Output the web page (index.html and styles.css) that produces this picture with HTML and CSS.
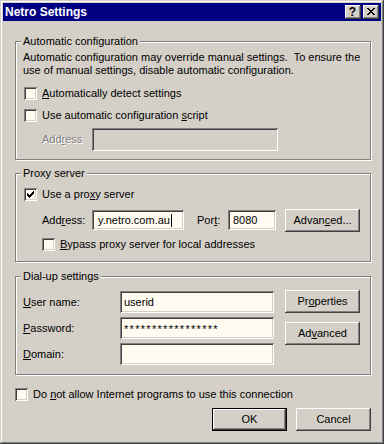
FILE: index.html
```html
<!DOCTYPE html>
<html>
<head>
    <title>Netro Settings</title>
    <link rel="stylesheet" href="styles.css">
</head>
<body>
    <div class="window">
        <div class="titlebar">
            <span class="title">Netro Settings</span>
            <div class="caption-buttons">
                <span class="caption-btn help">?</span>
                <span class="caption-btn">
                    <svg width="16" height="14" viewBox="0 0 16 14" shape-rendering="crispEdges">
                        <path d="M4 3h2v1h-2z M10 3h2v1h-2z M5 4h2v1h-2z M9 4h2v1h-2z M6 5h4v1h-4z M7 6h2v1h-2z M6 7h4v1h-4z M5 8h2v1h-2z M9 8h2v1h-2z M4 9h2v1h-2z M10 9h2v1h-2z" fill="#000"/>
                    </svg>
                </span>
            </div>
        </div>

        <div class="content">
            <div class="group group-auto">
                <div class="group-title">Automatic configuration</div>
                <p class="desc">Automatic configuration may override manual settings.&nbsp; To ensure the<br>use of manual settings, disable automatic configuration.</p>
                <div class="check-row first">
                    <span class="checkbox"></span>
                    <span class="check-label"><u>A</u>utomatically detect settings</span>
                </div>
                <div class="check-row second">
                    <span class="checkbox"></span>
                    <span class="check-label">Use automatic configuration <u>s</u>cript</span>
                </div>
                <div class="field-row script-row">
                    <span class="field-label disabled">Add<u>r</u>ess</span>
                    <span class="textbox textbox-disabled script-box"></span>
                </div>
            </div>

            <div class="group group-proxy">
                <div class="group-title">Proxy server</div>
                <div class="check-row first">
                    <span class="checkbox">
                        <svg width="13" height="13" viewBox="0 0 13 13" shape-rendering="crispEdges">
                            <path d="M3 5h1v3h-1z M4 6h1v3h-1z M5 7h1v3h-1z M6 6h1v3h-1z M7 5h1v3h-1z M8 4h1v3h-1z M9 3h1v3h-1z" fill="#000"/>
                        </svg>
                    </span>
                    <span class="check-label">Use a pro<u>x</u>y server</span>
                </div>
                <div class="proxy-row">
                    <span class="field-label proxy-label">Add<u>r</u>ess:</span>
                    <span class="textbox proxy-box">y.netro.com.au<span class="caret"></span></span>
                    <span class="field-label port-label">Por<u>t</u>:</span>
                    <span class="textbox port-box">8080</span>
                    <button class="btn proxy-btn">Advan<u>c</u>ed...</button>
                </div>
                <div class="check-row bypass-row">
                    <span class="checkbox"></span>
                    <span class="check-label"><u>B</u>ypass proxy server for local addresses</span>
                </div>
            </div>

            <div class="group group-dialup">
                <div class="group-title">Dial-up settings</div>
                <div class="dialup-body">
                    <div class="dialup-fields">
                        <div class="field-row">
                            <span class="field-label dialup-label"><u>U</u>ser name:</span>
                            <span class="textbox dialup-box">userid</span>
                        </div>
                        <div class="field-row">
                            <span class="field-label dialup-label"><u>P</u>assword:</span>
                            <span class="textbox dialup-box password">*****************</span>
                        </div>
                        <div class="field-row">
                            <span class="field-label dialup-label"><u>D</u>omain:</span>
                            <span class="textbox dialup-box"></span>
                        </div>
                    </div>
                    <div class="dialup-buttons">
                        <button class="btn">Pr<u>o</u>perties</button>
                        <button class="btn">Ad<u>v</u>anced</button>
                    </div>
                </div>
            </div>

            <div class="check-row no-internet">
                <span class="checkbox"></span>
                <span class="check-label">Do <u>n</u>ot allow Internet programs to use this connection</span>
            </div>

            <div class="dialog-buttons">
                <button class="btn btn-default">OK</button>
                <button class="btn">Cancel</button>
            </div>
        </div>
    </div>
</body>
</html>
```

FILE: styles.css
```css
:root {
    --face: #d4d0c8;
    --shadow: #808080;
    --dark: #404040;
    --field: #fffbf0;
    --caption: #000080;
}

* {
    margin: 0;
    padding: 0;
    box-sizing: border-box;
}

body {
    margin: 0;
    background: var(--face);
    font-family: 'Liberation Sans', Arial, sans-serif;
    font-size: 11px;
    line-height: 13px;
    color: #000;
}

u {
    text-decoration: underline;
    text-underline-offset: 1px;
}

.window {
    width: 384px;
    height: 444px;
    padding: 3px;
    background: var(--face);
    box-shadow: inset -1px -1px var(--dark), inset 1px 1px var(--face),
                inset -2px -2px var(--shadow), inset 2px 2px #fff;
}

/* title bar */
.titlebar {
    height: 18px;
    background: var(--caption);
    display: flex;
    align-items: center;
    padding: 0 2px;
    color: #fff;
    font-weight: bold;
}

.title {
    font-size: 12px;
}

.caption-buttons {
    margin-left: auto;
    display: flex;
    gap: 2px;
}

.caption-btn {
    width: 16px;
    height: 14px;
    background: var(--face);
    color: #000;
    display: flex;
    align-items: center;
    justify-content: center;
    box-shadow: inset -1px -1px var(--dark), inset 1px 1px #fff,
                inset -2px -2px var(--shadow), inset 2px 2px var(--face);
}

.caption-btn.help {
    font-size: 12px;
    padding-right: 1px;
}

.caption-btn svg {
    display: block;
}

/* content */
.content {
    padding: 0 10px 0 12px;
}

.group {
    width: 356px;
    border: 1px solid var(--shadow);
    box-shadow: 1px 1px 0 #fff, inset 1px 1px 0 #fff;
    padding: 0 7px;
}

.group-title {
    display: table;
    margin: -7px 0 0 -2px;
    padding: 0 2px;
    background: var(--face);
}

.group-auto {
    margin-top: 20px;
    padding-bottom: 8px;
}

.group-proxy {
    margin-top: 13px;
    padding-bottom: 10px;
}

.group-dialup {
    margin-top: 14px;
    padding-bottom: 9px;
}

.desc {
    margin-top: 3px;
    white-space: nowrap;
}

/* checkboxes */
.check-row {
    display: flex;
    align-items: center;
    height: 13px;
    padding-left: 1px;
}

.check-row.first {
    margin-top: 8px;
}

.group-auto .check-row.first {
    margin-top: 10px;
}

.check-row.second {
    margin-top: 9px;
}

.checkbox {
    width: 13px;
    height: 13px;
    flex-shrink: 0;
    background: var(--field);
    box-shadow: inset 1px 1px var(--shadow), inset -1px -1px #fff,
                inset 2px 2px var(--dark), inset -2px -2px var(--face);
}

.checkbox svg {
    display: block;
}

.check-label {
    margin-left: 5px;
    white-space: nowrap;
}

.bypass-row {
    margin-top: 6px;
    padding-left: 19px;
}

.no-internet {
    margin-top: 13px;
    padding-left: 0;
}

/* text fields */
.field-row {
    display: flex;
    align-items: center;
}

.field-label {
    flex-shrink: 0;
    white-space: nowrap;
}

.field-label.disabled {
    color: var(--shadow);
    text-shadow: 1px 1px #fff;
}

.textbox {
    display: flex;
    align-items: center;
    height: 22px;
    padding: 0 4px;
    background: var(--field);
    white-space: nowrap;
    overflow: hidden;
    box-shadow: inset 1px 1px var(--shadow), inset -1px -1px #fff,
                inset 2px 2px var(--dark), inset -2px -2px var(--face);
}

.textbox-disabled {
    background: var(--face);
}

.script-row {
    margin-top: 6px;
    padding-left: 19px;
}

.script-row .field-label {
    width: 50px;
}

.script-box {
    width: 186px;
    height: 23px;
}

.proxy-row {
    display: flex;
    align-items: flex-start;
    margin-top: 8px;
    padding-left: 19px;
}

.proxy-row .field-label {
    line-height: 22px;
}

.proxy-label {
    width: 50px;
}

.proxy-box {
    width: 92px;
    height: 20px;
    margin-top: 1px;
    padding-left: 6px;
}

.caret {
    width: 1px;
    height: 13px;
    margin-left: 1px;
    background: #000;
}

.port-label {
    width: 31px;
    margin-left: 13px;
}

.port-box {
    width: 48px;
    height: 20px;
    margin-top: 1px;
    padding-left: 5px;
}

.proxy-btn {
    margin-left: 9px;
}

/* dial-up */
.dialup-body {
    display: flex;
}

.dialup-fields {
    display: flex;
    flex-direction: column;
    gap: 4px;
    margin-top: 8px;
}

.dialup-label {
    width: 97px;
}

.dialup-box {
    width: 154px;
}

.password {
    letter-spacing: 1.3px;
    padding-top: 3px;
}

.dialup-buttons {
    display: flex;
    flex-direction: column;
    gap: 9px;
    margin: 7px 0 0 11px;
}

/* push buttons */
.btn {
    width: 75px;
    height: 23px;
    border: none;
    background: var(--face);
    font: inherit;
    color: #000;
    flex-shrink: 0;
    box-shadow: inset -1px -1px var(--dark), inset 1px 1px #fff,
                inset -2px -2px var(--shadow), inset 2px 2px var(--face);
}

.btn-default {
    box-shadow: inset 0 0 0 1px #000, inset -2px -2px var(--dark), inset 2px 2px #fff,
                inset -3px -3px var(--shadow);
}

.dialog-buttons {
    display: flex;
    justify-content: flex-end;
    gap: 9px;
    margin-top: 7px;
}
```
